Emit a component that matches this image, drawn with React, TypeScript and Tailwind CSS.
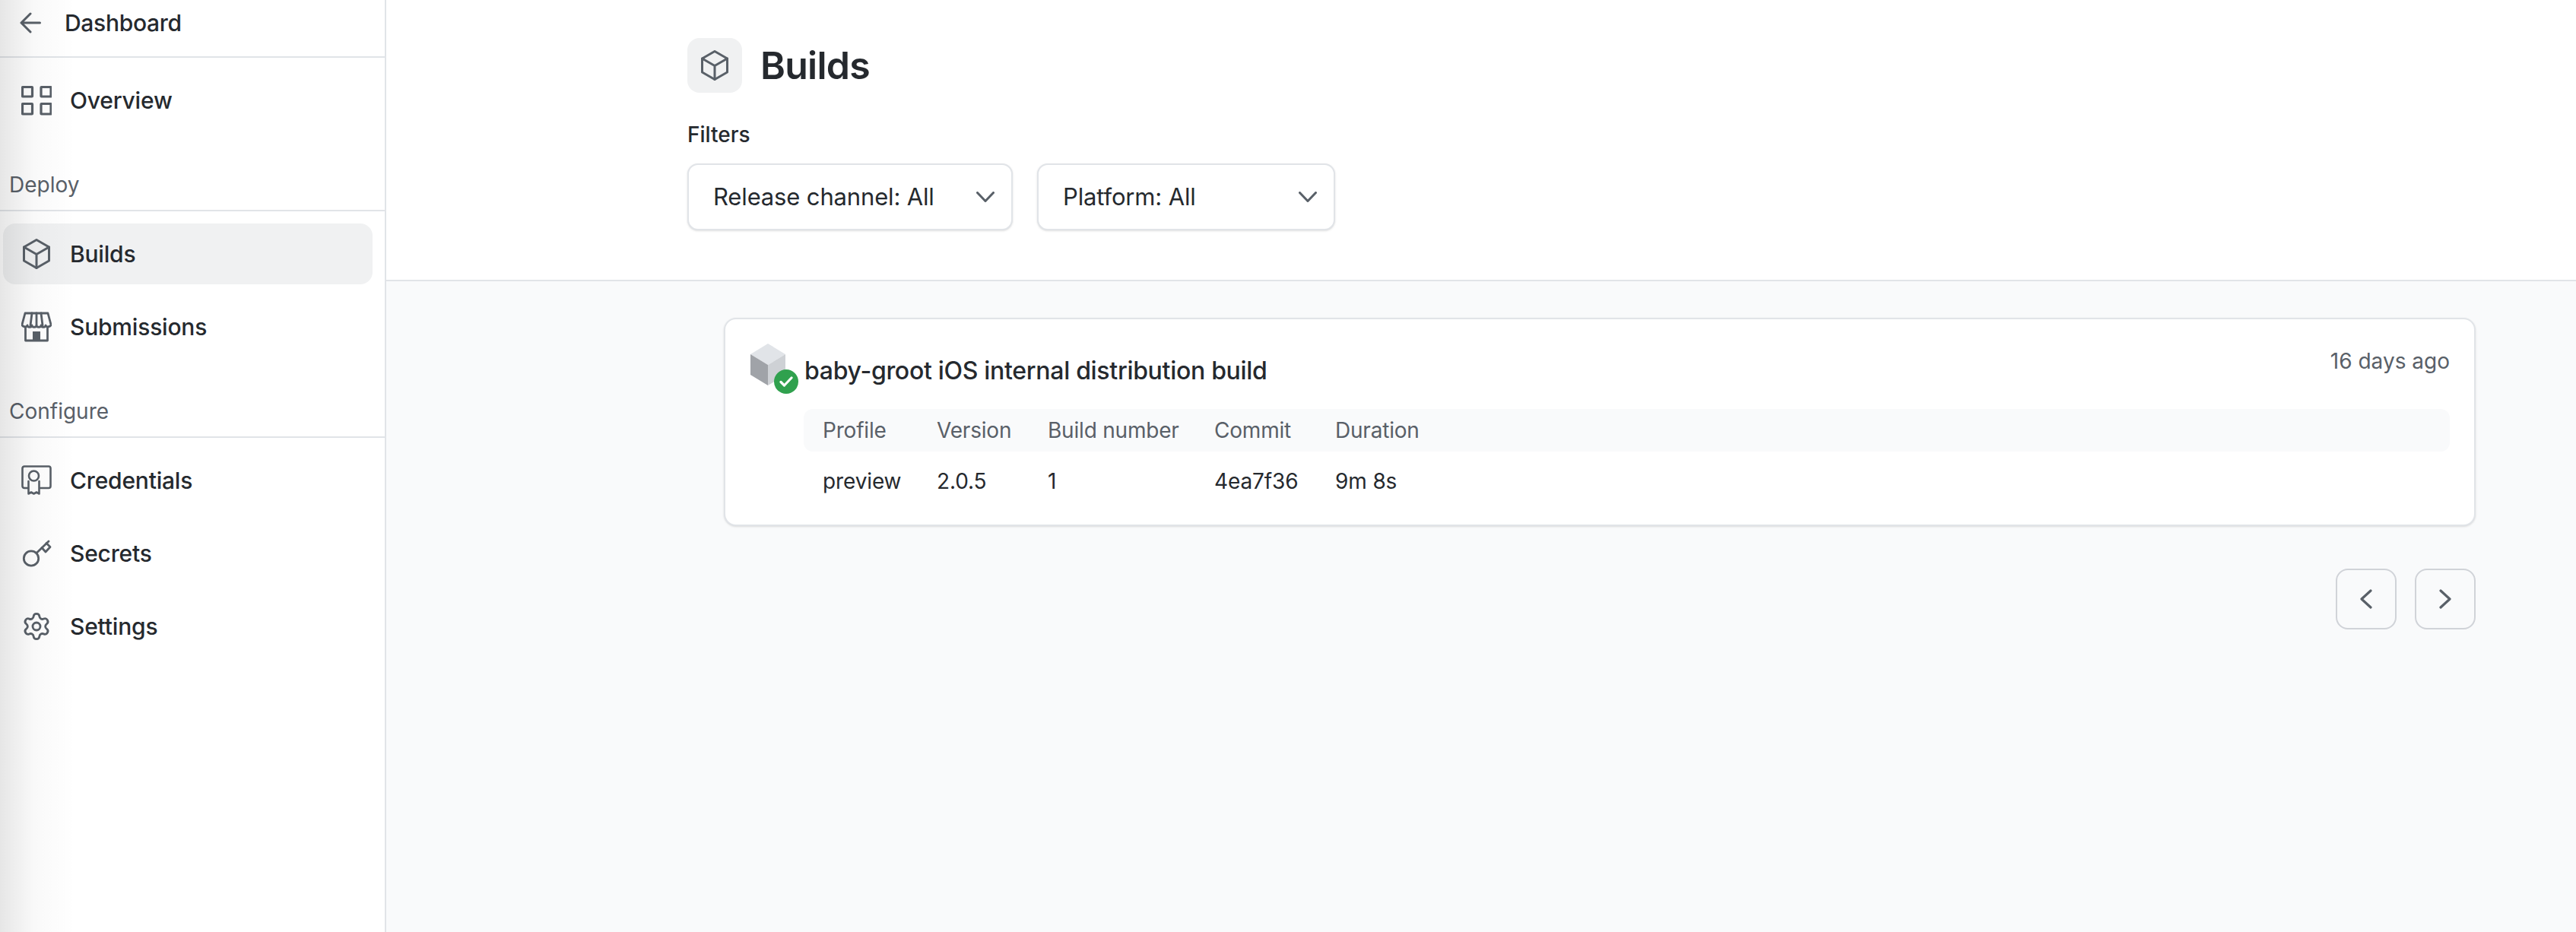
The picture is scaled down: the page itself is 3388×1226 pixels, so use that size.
import React from "react";
import { Settings } from "lucide-react";

const stroke = "#596068";

function GridIcon() {
  return (
    <svg width="40" height="40" viewBox="0 0 40 40" fill="none" stroke={stroke} strokeWidth="3.200" strokeLinejoin="round">
      <rect x="1.500" y="2.500" width="13" height="12.500" rx="0.5" />
      <rect x="26" y="2.500" width="13" height="12.500" rx="0.5" />
      <rect x="1.500" y="24.500" width="13" height="13.500" rx="0.5" />
      <rect x="26" y="24.500" width="13" height="13.500" rx="0.5" />
    </svg>
  );
}

function CubeIcon({ size = 40 }: { size?: number }) {
  return (
    <svg width={size} height={size} viewBox="0 0 40 40" fill="none" stroke={stroke} strokeWidth="3" strokeLinejoin="round" strokeLinecap="round">
      <path d="M20 1.500 36.500 11v18L20 38.500 3.500 29V11z" />
      <path d="M3.500 11 20 20.500 36.500 11M20 20.500v18" />
    </svg>
  );
}

function StoreIcon() {
  return (
    <svg width="40" height="40" viewBox="0 0 40 40" fill="none" stroke={stroke} strokeWidth="2.800" strokeLinejoin="round" strokeLinecap="round">
      <path d="M5 2h30l4 15c0 3-6 4-7 1 0 3-6 3-6 0 0 3-6 3-6 0 0 3-6 3-6 0 0 3-6 3-6 0-1 3-7 2-7-1z" />
      <path d="M14 2l-2 16M20 2v16M26 2l2 16" />
      <path d="M5.500 21v17h29V21" />
      <rect x="15" y="26" width="10" height="12" fill={stroke} stroke="none" />
    </svg>
  );
}

function CertificateIcon() {
  return (
    <svg width="40" height="40" viewBox="0 0 40 40" fill="none" stroke={stroke} strokeWidth="2.600" strokeLinejoin="round" strokeLinecap="round">
      <path d="M9 30H4a2.500 2.500 0 0 1-2.500-2.500V4A2.500 2.500 0 0 1 4 1.500h32A2.500 2.500 0 0 1 38.500 4v23.500A2.500 2.500 0 0 1 36 30H25" />
      <circle cx="16.500" cy="14" r="6.500" />
      <path d="M9.500 21v16.500l3.500-2 3.500 2 3.500-2 3.500 2V21" />
    </svg>
  );
}

function KeyIcon() {
  return (
    <svg width="40" height="40" viewBox="0 0 40 40" fill="none" stroke={stroke} strokeWidth="2.800" strokeLinejoin="round" strokeLinecap="round">
      <circle cx="13" cy="26.500" r="9.700" />
      <path d="M20 19.500 36 4" />
      <path d="M27 12.500l5 5.500 6-6.500-5-5" />
    </svg>
  );
}

function ArrowIcon() {
  return (
    <svg width="28" height="28" viewBox="0 0 28 28" fill="none" stroke={stroke} strokeWidth="3" strokeLinejoin="round" strokeLinecap="round">
      <path d="M26.500 14H2M14 2 2 14l12 12" />
    </svg>
  );
}

function Chevron() {
  return (
    <svg width="24" height="14" viewBox="0 0 24 14" fill="none" stroke={stroke} strokeWidth="3" strokeLinejoin="round" strokeLinecap="round">
      <path d="M1.500 1.500 12 12.500 22.500 1.500" />
    </svg>
  );
}

function Pager({ left }: { left?: boolean }) {
  return (
    <button className="flex h-20 w-20 items-center justify-center rounded-2xl border-2 border-[#d0d3d8]">
      <svg width="16" height="26" viewBox="0 0 16 26" fill="none" stroke={stroke} strokeWidth="3.200" strokeLinejoin="round" strokeLinecap="round">
        <path d={left ? "M14 2 2 13l12 11" : "M2 2l12 11L2 24"} />
      </svg>
    </button>
  );
}

function NavItem({ icon, label, active }: { icon: React.ReactNode; label: string; active?: boolean }) {
  return (
    <div className={`flex h-20 items-center gap-6 rounded-2xl pl-6 text-[30px] font-medium tracking-[-0.2px] text-[#25292e] ${active ? "bg-[#f0f1f2]" : ""}`}>
      <span className="flex h-10 w-10 items-center justify-center">{icon}</span>
      {label}
    </div>
  );
}

function SectionLabel({ children }: { children: React.ReactNode }) {
  return (
    <div className="flex h-[106px] items-end border-b-2 border-[#e1e4e8] pb-[13px] pl-[12px] text-[28px] leading-[40px] text-[#596068]">
      {children}
    </div>
  );
}

function BuildGlyph() {
  return (
    <div className="relative h-[68px] w-[66px]">
      <svg width="48" height="56" viewBox="0 0 48 56" className="block">
        <path d="M24 0 47 14 24 28 1 14z" fill="#e1e4e8" />
        <path d="M1 14 24 28V55L1 41z" fill="#a0a3a8" />
        <path d="M47 14 24 28V55L47 41z" fill="#ced1d5" />
      </svg>
      <span className="absolute left-[32px] top-[34px] flex h-8 w-8 items-center justify-center rounded-full bg-[#30a14e]">
        <svg width="18" height="14" viewBox="0 0 18 14" fill="none" stroke="#ffffff" strokeWidth="3.200" strokeLinecap="round" strokeLinejoin="round">
          <path d="M2 7.500 6.500 12 16 2" />
        </svg>
      </span>
    </div>
  );
}

function Filter({ label, width }: { label: string; width: string }) {
  return (
    <div className={`flex h-[88px] items-center justify-between rounded-[14px] border-2 border-[#e1e4e8] bg-white pl-8 pr-[22px] text-[31px] tracking-[-0.15px] text-[#25292e] shadow-sm ${width}`}>
      <span className="mt-px">{label}</span>
      <Chevron />
    </div>
  );
}

export default function App() {
  const cols = "grid grid-cols-[150px_146px_219px_159px_1fr] pl-[25px]";
  return (
    <div className="relative flex h-[1226px] overflow-hidden bg-white font-['Inter',sans-serif]">
      <aside className="w-[508px] shrink-0 border-r-2 border-[#e1e4e8]">
        <div className="flex h-[76px] items-start gap-[31px] border-b-2 border-[#e1e4e8] pl-[26px] pt-[11px] text-[30px] font-medium leading-[38px] tracking-[-0.3px] text-[#25292e]">
          <span className="mt-[5px]">
            <ArrowIcon />
          </span>
          Dashboard
        </div>
        <div className="mr-[16px] ml-1 mt-4">
          <NavItem icon={<GridIcon />} label="Overview" />
        </div>
        <SectionLabel>Deploy</SectionLabel>
        <div className="ml-1 mr-[16px] mt-4 flex flex-col gap-4">
          <NavItem icon={<CubeIcon />} label="Builds" active />
          <NavItem icon={<StoreIcon />} label="Submissions" />
        </div>
        <SectionLabel>Configure</SectionLabel>
        <div className="ml-1 mr-[16px] mt-4 flex flex-col gap-4">
          <NavItem icon={<CertificateIcon />} label="Credentials" />
          <NavItem icon={<KeyIcon />} label="Secrets" />
          <NavItem icon={<Settings size={44} color={stroke} strokeWidth={1.7} />} label="Settings" />
        </div>
      </aside>

      <main className="flex min-w-0 flex-1 flex-col bg-[#f9fafb]">
        <header className="h-[370px] shrink-0 border-b-2 border-[#e1e4e8] bg-white pl-[396px] pt-[50px]">
          <div className="flex items-center gap-6">
            <span className="flex h-[72px] w-[72px] items-center justify-center rounded-2xl bg-[#f0f1f2]">
              <CubeIcon size={40} />
            </span>
            <h1 className="text-[50px] font-semibold leading-[72px] tracking-[-0.75px] text-[#25292e]">Builds</h1>
          </div>
          <div className="mt-[36px] text-[28px] font-medium leading-[38px] text-[#25292e]">Filters</div>
          <div className="mt-[19px] flex gap-[32px]">
            <Filter label="Release channel: All" width="w-[428px]" />
            <Filter label="Platform: All" width="w-[392px]" />
          </div>
        </header>

        <section className="ml-[444px] mr-[132px] mt-[48px]">
          <div className="flex h-[274px] rounded-2xl border-2 border-[#e1e4e8] bg-white pl-[32px] pr-[32px] pt-[32px] shadow-sm">
            <div className="w-[71px] shrink-0">
              <BuildGlyph />
            </div>
            <div className="flex min-w-0 flex-1 flex-col">
              <div className="flex h-[86px] items-start justify-between">
                <span className="ml-px mt-[15px] text-[32px] font-medium leading-[42px] tracking-[-0.3px] text-[#25292e]">baby-groot iOS internal distribution build</span>
                <span className="mt-[3px] text-[28px] leading-[40px] text-[#596068]">16 days ago</span>
              </div>
              <div className={`${cols} h-[56px] items-center rounded-xl bg-[#f9fafb] text-[28px] tracking-[-0.2px] text-[#596068]`}>
                <span>Profile</span>
                <span>Version</span>
                <span>Build number</span>
                <span>Commit</span>
                <span>Duration</span>
              </div>
              <div className={`${cols} mt-[17px] text-[28px] leading-[44px] tracking-[-0.12px] text-[#25292e]`}>
                <span>preview</span>
                <span>2.0.5</span>
                <span>1</span>
                <span>4ea7f36</span>
                <span>9m 8s</span>
              </div>
            </div>
          </div>
          <div className="mt-[56px] flex justify-end gap-6">
            <Pager left />
            <Pager />
          </div>
        </section>
      </main>

      <div className="pointer-events-none absolute inset-y-0 left-0 w-[100px] bg-gradient-to-r from-[#00000019] via-[#00000006] via-45% to-[#00000000]" />
    </div>
  );
}
